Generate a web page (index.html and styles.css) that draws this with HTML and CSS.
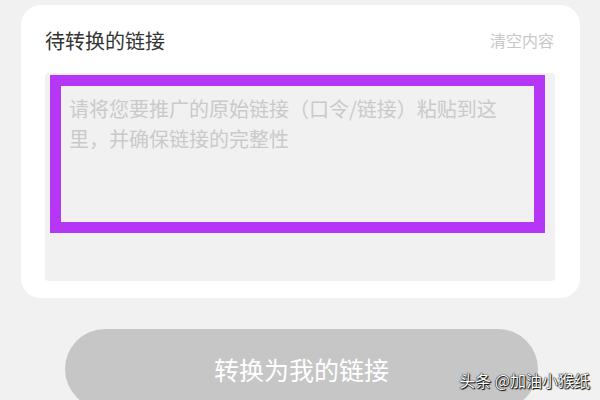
FILE: index.html
```html
<!DOCTYPE html>
<html lang="zh-CN">
<head>
    <meta charset="UTF-8">
    <meta name="viewport" content="width=device-width, initial-scale=1.0">
    <title>转换链接</title>
    <link rel="stylesheet" href="styles.css">
</head>
<body>

<div class="card">
    <div class="card-head">
        <span class="title">待转换的链接</span>
        <span class="clear">清空内容</span>
    </div>

    <div class="input-box">
        <p class="placeholder">请将您要推广的原始链接（口令/链接）粘贴到这里，并确保链接的完整性</p>
        <div class="mark"></div>
    </div>
</div>

<div class="btn">转换为我的链接</div>

<div class="watermark">头条 @加油小猴纸</div>

</body>
</html>
```

FILE: styles.css
```css
body {
    font-family: "Noto Sans CJK SC", "Noto Sans", sans-serif;
    background-color: #f1f1f1;
    margin: 0;
    padding-top: 5px;
    height: 395px;
    overflow: hidden;
    position: relative;
}

.card {
    margin: 0 20px 0 21px;
    background-color: #fff;
    border-radius: 20px;
    padding: 21px 25px 17px 24px;
}

.card-head {
    display: flex;
    justify-content: space-between;
    align-items: center;
    height: 28px;
    margin-bottom: 19px;
}

.title {
    font-size: 20px;
    color: #333;
}

.clear {
    font-size: 16px;
    color: #c8c8c8;
    margin-right: 1px;
}

.input-box {
    position: relative;
    height: 208px;
    background-color: #f1f1f1;
    border-radius: 4px;
    padding: 21px 46px 0 24px;
    box-sizing: border-box;
}

.placeholder {
    margin: 0;
    font-size: 20px;
    line-height: 30px;
    color: #cacaca;
}

/* annotation box drawn over the screenshot */
.mark {
    position: absolute;
    left: 5px;
    top: 2px;
    width: 495px;
    height: 158px;
    border: 11px solid #b536f4;
    box-sizing: border-box;
}

.btn {
    margin: 31px 0 0 65px;
    width: 473px;
    height: 80px;
    border-radius: 40px;
    background-color: #c6c6c6;
    color: #fff;
    font-size: 25px;
    display: flex;
    align-items: center;
    justify-content: center;
}

.watermark {
    position: absolute;
    right: 10px;
    bottom: 8px;
    font-size: 16px;
    color: #fff;
    text-shadow: 0 0 1px #000, 0 0 1px #000, 1px 1px 1px #000;
}
```
